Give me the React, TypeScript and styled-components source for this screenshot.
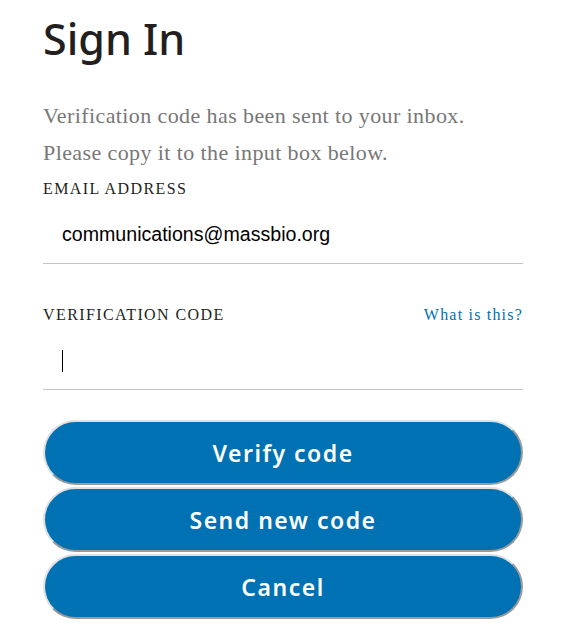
import styled, { createGlobalStyle } from 'styled-components'

const GlobalStyle = createGlobalStyle`
  html, body {
    margin: 0;
    padding: 0;
    background: #fff;
  }
`

const Page = styled.div`
  width: 480px;
  margin: 0 auto;
  padding-top: 15px;
  display: flex;
  flex-direction: column;
`

const Title = styled.h1`
  margin: 0;
  font-family: "Noto Sans", sans-serif;
  font-size: 43px;
  font-weight: 500;
  line-height: 48px;
  color: #231f20;
`

const Intro = styled.p`
  margin: 34px 0 0;
  font-family: "Liberation Serif", serif;
  font-size: 22px;
  line-height: 37px;
  letter-spacing: 0.4px;
  color: #777;
`

const Field = styled.div`
  display: flex;
  flex-direction: column;
`

const LabelRow = styled.div<{ $top: number }>`
  margin-top: ${p => p.$top}px;
  display: flex;
  justify-content: space-between;
  align-items: center;
  font-family: "Liberation Serif", serif;
  font-size: 16px;
  line-height: 18px;
  letter-spacing: 1.4px;
`

const Label = styled.label`
  color: #231f20;
  text-transform: uppercase;
`

const HelpLink = styled.a`
  color: #0071b2;
  text-decoration: none;
  letter-spacing: 1.2px;
`

const InputBox = styled.div`
  box-sizing: border-box;
  height: 54px;
  margin-top: 12px;
  padding: 0 0 4px 19px;
  display: flex;
  align-items: center;
  border-bottom: 1px solid #c4c4c4;
`

const TextInput = styled.input`
  border: none;
  outline: none;
  padding: 0;
  width: 100%;
  font-family: "Liberation Sans", Arial, sans-serif;
  font-size: 19.6px;
  color: #000;
  background: transparent;
`

const Caret = styled.span`
  display: block;
  width: 1px;
  height: 22px;
  background: #000;
`

const Buttons = styled.div`
  margin-top: 30px;
  display: flex;
  flex-direction: column;
  gap: 2px;
`

const Button = styled.button`
  height: 65px;
  width: 100%;
  border-radius: 33px;
  border: 2px solid;
  border-color: #e0e0e0 #9a9a9a #9a9a9a #e0e0e0;
  background: #0071b2;
  color: #fff;
  font-family: "Noto Sans", sans-serif;
  font-size: 23px;
  font-weight: 600;
  letter-spacing: 1.5px;
  cursor: pointer;
`

export default function App() {
  return (
    <>
      <GlobalStyle />
      <Page>
        <Title>Sign In</Title>
        <Intro>
          Verification code has been sent to your inbox.
          <br />
          Please copy it to the input box below.
        </Intro>
        <Field>
          <LabelRow $top={9}>
            <Label>Email Address</Label>
          </LabelRow>
          <InputBox>
            <TextInput type="email" value="communications@massbio.org" readOnly />
          </InputBox>
        </Field>
        <Field>
          <LabelRow $top={42}>
            <Label>Verification Code</Label>
            <HelpLink href="#">What is this?</HelpLink>
          </LabelRow>
          <InputBox>
            <Caret />
          </InputBox>
        </Field>
        <Buttons>
          <Button>Verify code</Button>
          <Button>Send new code</Button>
          <Button>Cancel</Button>
        </Buttons>
      </Page>
    </>
  )
}
